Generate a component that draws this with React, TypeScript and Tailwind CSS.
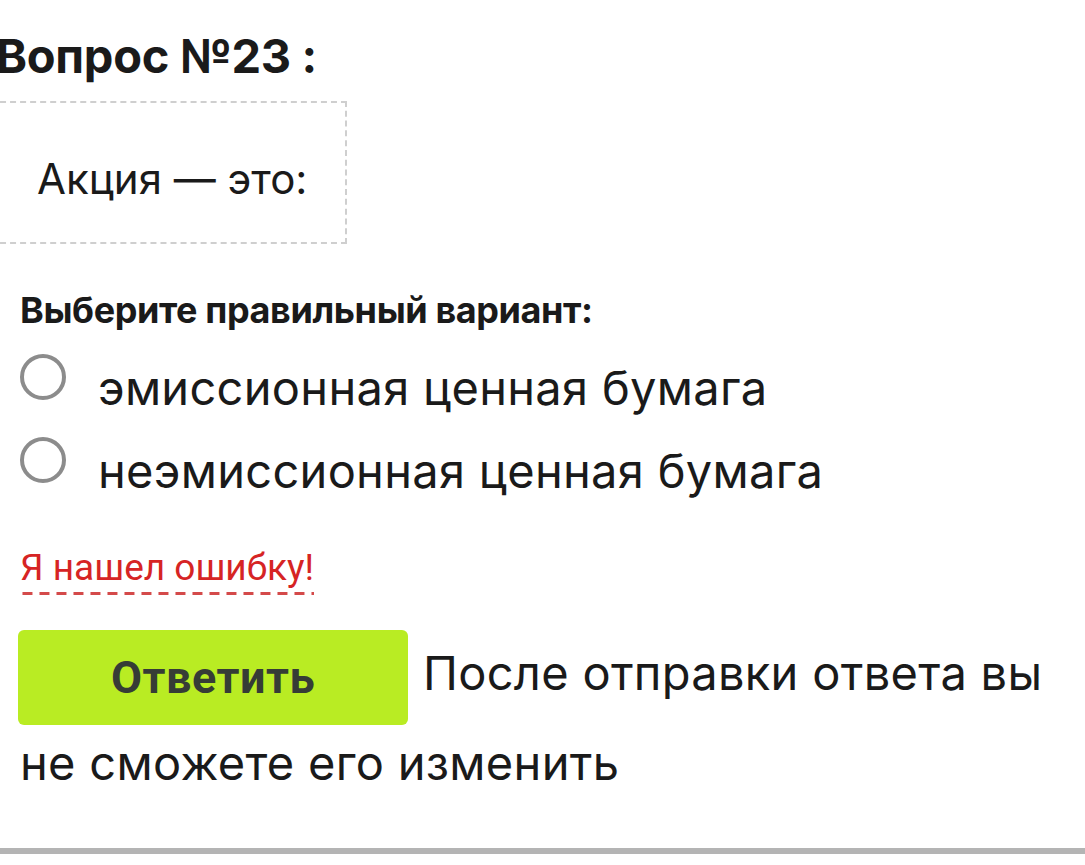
export default function App() {
  return (
    <div className="flex h-[865px] w-[1085px] flex-col overflow-hidden bg-white font-['Inter',sans-serif] text-[#1c1c1c]">
      <div className="pl-[20px]">
        {/* Question title */}
        <h2 className="-ml-[24px] mt-[28px] text-[47px] font-bold leading-[56px] tracking-[-0.3px] text-[#1a1a1a]">
          Вопрос №23 :
        </h2>

        {/* Question body */}
        <div className="-ml-[30px] mt-[17px] flex h-[143px] w-[357px] items-center border-2 border-dashed border-[#cfcfcf] pl-[45px] pt-[12px]">
          <span className="text-[42px] leading-none text-[#1a1a1a]">Акция — это:</span>
        </div>

        <p className="mt-[46px] text-[36px] font-bold leading-[40px] tracking-[-0.4px] text-[#1a1a1a]">
          Выберите правильный вариант:
        </p>

        {/* Options */}
        <div className="mt-[24px] flex flex-col gap-[22px]">
          {['эмиссионная ценная бумага', 'неэмиссионная ценная бумага'].map((opt) => (
            <label key={opt} className="flex items-start">
              <span className="h-[46px] w-[46px] shrink-0 rounded-full border-[4px] border-[#8c8c8c] bg-white" />
              <span className="ml-[32px] mt-[7px] text-[47px] leading-[54px] tracking-[0.3px] text-[#1a1a1a]">{opt}</span>
            </label>
          ))}
        </div>

        <div className="mt-[48px]">
          <span className="bg-[linear-gradient(to_right,#d44a4a_10px,transparent_10px)] bg-[length:17px_3px] bg-bottom bg-repeat-x pb-[6px] font-['Roboto',sans-serif] text-[37px] leading-[44px] text-[#d62424]">
            Я нашел ошибку!
          </span>
        </div>

        {/* Answer */}
        <div className="-ml-[2px] mt-[40px] pr-[20px] text-[47px] leading-[76px] tracking-[0.3px] text-[#1a1a1a]">
          <button className="mr-[15px] inline-block h-[95px] w-[390px] rounded-[6px] bg-[#b9ec23] align-middle font-['Roboto',sans-serif] text-[45px] font-bold tracking-[0.5px] text-[#363c36]">
            Ответить
          </button>
          После отправки ответа вы <span className="ml-[2px]">не сможете его изменить</span>
        </div>
      </div>

      <div className="mb-[11px] mt-auto h-[6px] w-full bg-[#b4b4b4]" />
    </div>
  )
}
